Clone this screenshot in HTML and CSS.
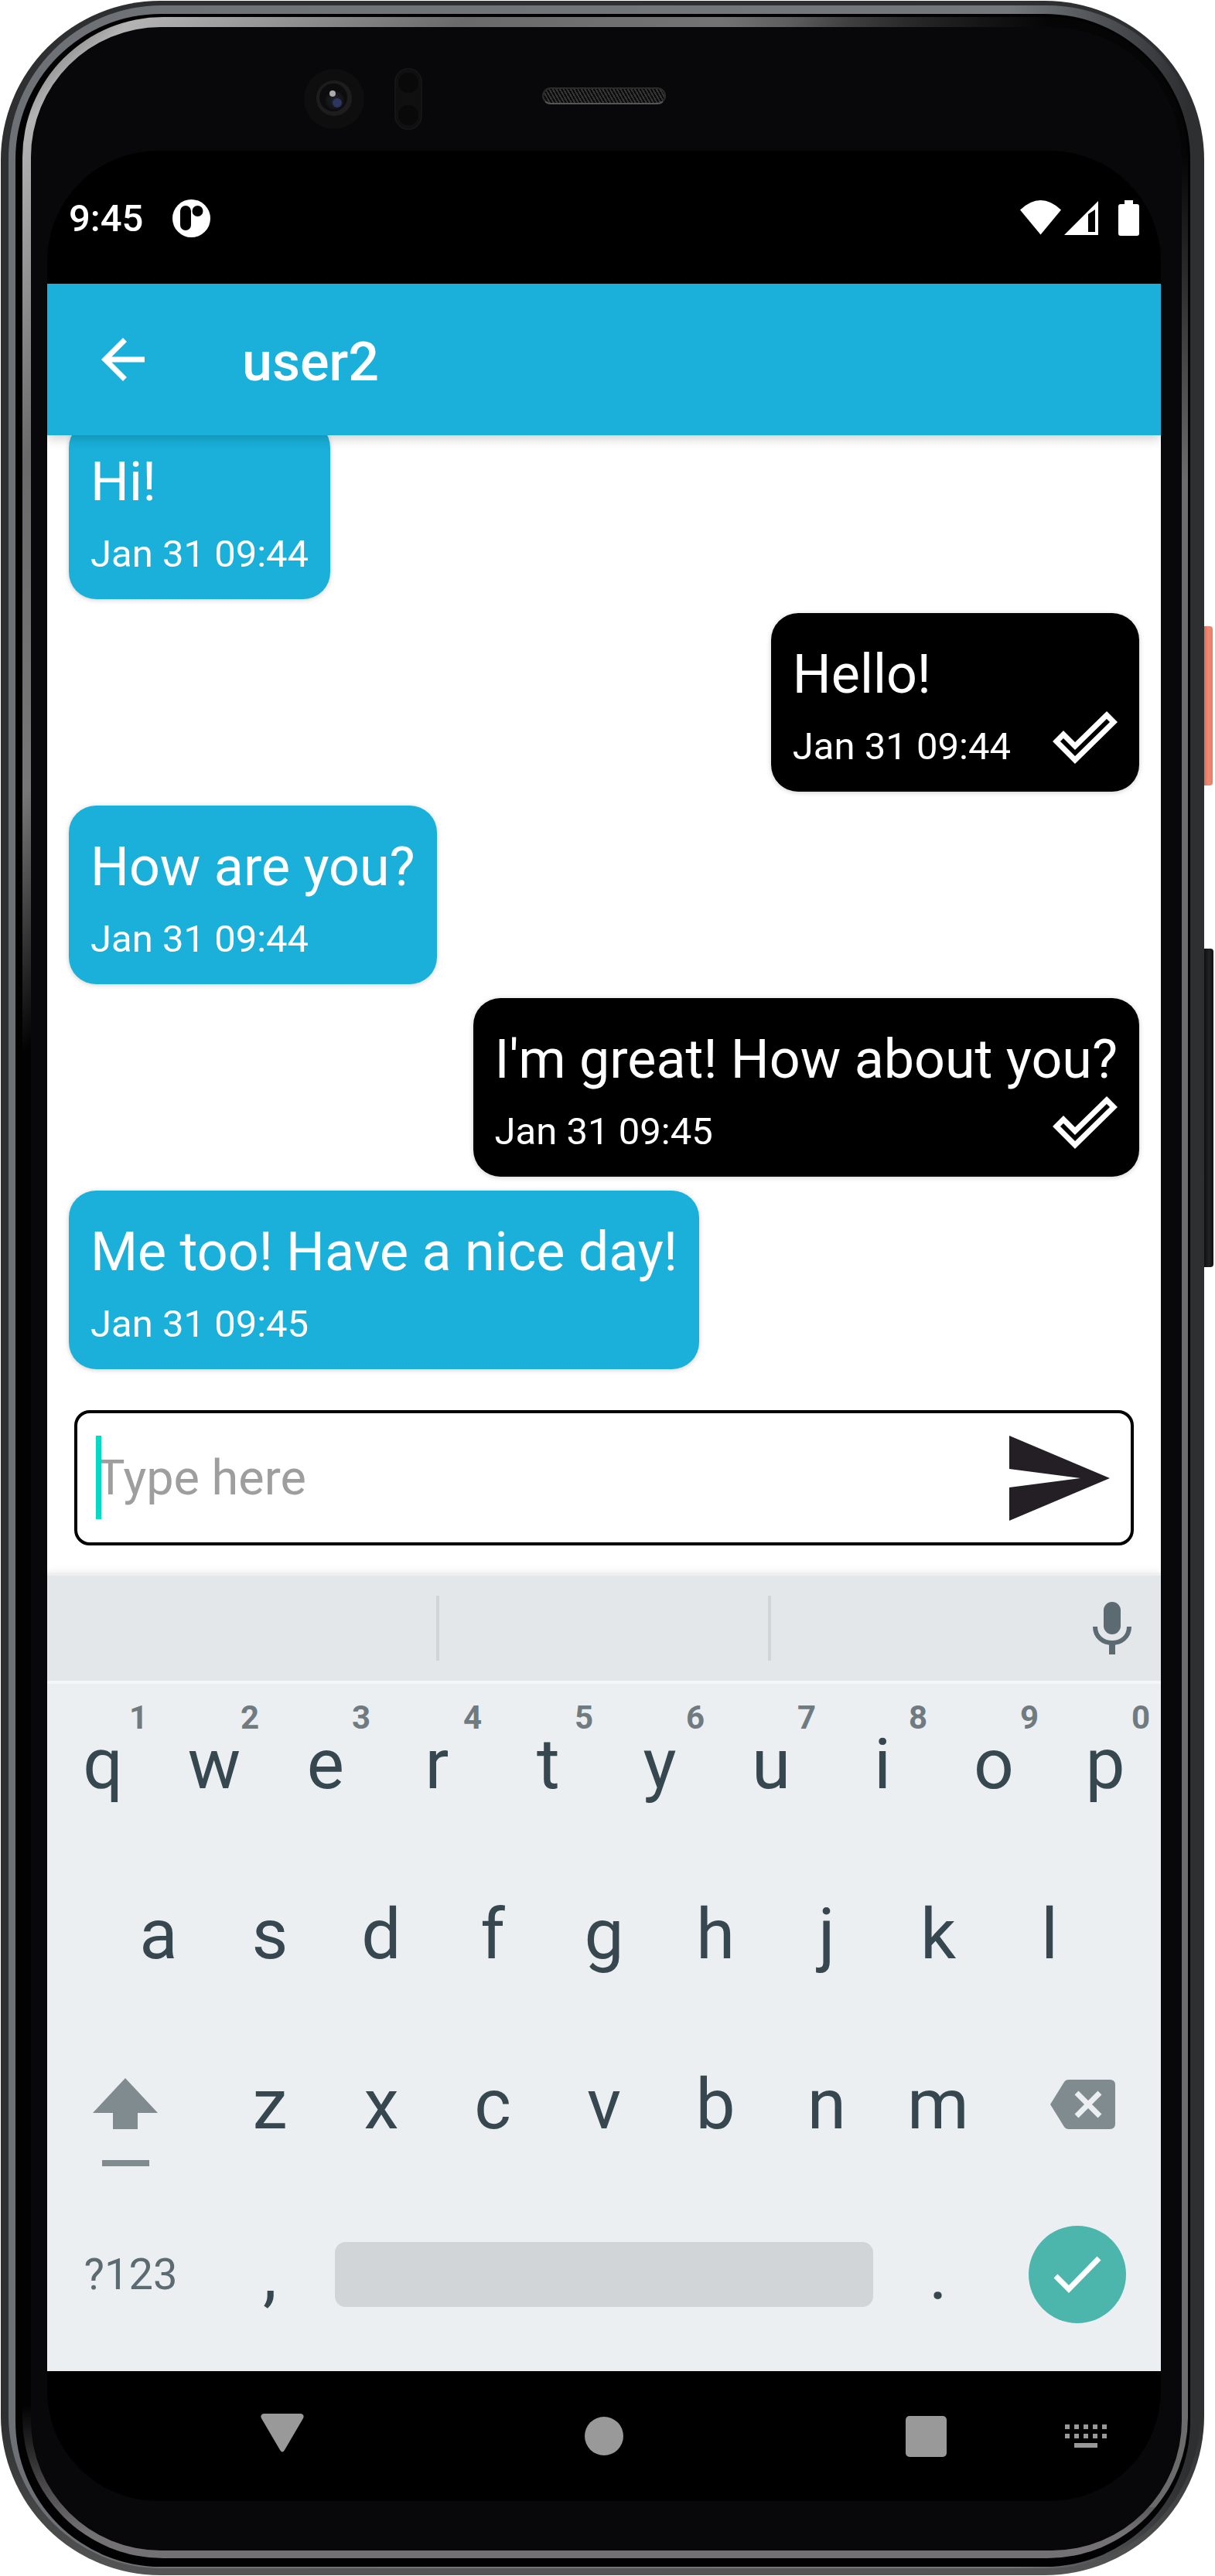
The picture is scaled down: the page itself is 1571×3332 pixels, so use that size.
FILE: index.html
```html
<!DOCTYPE html>
<html lang="en">
<head>
<meta charset="utf-8">
<meta name="viewport" content="width=device-width, initial-scale=1">
<title>Chat with user2</title>
<link rel="stylesheet" href="styles.css">
</head>
<body>
<div class="phone">
  <span class="side-button power"></span>
  <span class="side-button volume"></span>
  <div class="case"><div class="metal"><div class="groove"><div class="edge"><div class="glass">
    <div class="forehead">
      <svg class="sensors" width="80" height="80" viewBox="0 0 80 80" aria-hidden="true">
        <defs>
          <radialGradient id="lens"><stop offset="0" stop-color="#1d2030"/><stop offset="1" stop-color="#121214"/></radialGradient>
        </defs>
        <circle cx="39" cy="40" r="39" fill="#0e0e0f"/>
        <circle cx="39" cy="39" r="23" fill="#1d1d1e"/>
        <circle cx="38" cy="38" r="18" fill="#0c0c0f"/>
        <circle cx="40" cy="42" r="12" fill="url(#lens)"/>
        <circle cx="43" cy="45" r="6" fill="#2d365e"/>
        <circle cx="37" cy="33" r="4" fill="#aaa"/>
      </svg>
      <svg class="proximity" width="36" height="80" viewBox="0 0 36 80" aria-hidden="true">
        <rect x="1" y="1" width="34" height="78" rx="17" fill="#0f0f10" stroke="#151515" stroke-width="2"/>
        <circle cx="18" cy="19" r="14" fill="#09090a" stroke="#141414"/>
        <circle cx="18" cy="61" r="14" fill="#09090a" stroke="#141414"/>
      </svg>
      <span class="speaker"></span>
    </div>
    <main class="screen">
      <div class="status-bar">
        <time>9:45</time>
        <svg width="49" height="49" viewBox="0 0 49 49" aria-hidden="true">
          <circle cx="24.500" cy="24.500" r="24.500" fill="#fff"/>
          <rect x="10" y="8" width="14" height="32" rx="7"/>
          <circle cx="32.500" cy="15" r="7"/>
        </svg>
        <svg class="radios" width="154" height="46" viewBox="0 0 154 46" fill="#fff" aria-hidden="true">
          <path d="M0 12.500Q26.500-12.500 53 12.500L26.500 44.500Z"/>
          <path fill-rule="evenodd" d="M57 45 101 1V45ZM88 18V41H97V12Z"/>
          <path d="M135 0h11v5h5q3 0 3 3v35q0 3-3 3h-21q-3 0-3-3V8q0-3 3-3h5z"/>
        </svg>
      </div>

      <header class="app-bar">
        <button class="icon-button" aria-label="Back">
          <svg width="84" height="84" viewBox="0 0 24 24" fill="#fff"><path d="M20 11H7.830l5.590-5.590L12 4l-8 8 8 8 1.410-1.410L7.830 13H20z"/></svg>
        </button>
        <h1>user2</h1>
      </header>

      <ol class="messages">
        <li class="message received"><p>Hi!</p><div class="meta"><time>Jan 31 09:44</time></div></li>
        <li class="message sent"><p>Hello!</p><div class="meta"><time>Jan 31 09:44</time>
          <svg width="84" height="78" viewBox="0 0 84 78" fill="none" stroke="#fff" stroke-width="7" aria-label="Delivered"><path d="M5 43 14 34 29 49 70 9 79 18 29 67Z"/></svg></div></li>
        <li class="message received"><p>How are you?</p><div class="meta"><time>Jan 31 09:44</time></div></li>
        <li class="message sent"><p>I'm great! How about you?</p><div class="meta"><time>Jan 31 09:45</time>
          <svg width="84" height="78" viewBox="0 0 84 78" fill="none" stroke="#fff" stroke-width="7" aria-label="Delivered"><path d="M5 43 14 34 29 49 70 9 79 18 29 67Z"/></svg></div></li>
        <li class="message received"><p>Me too! Have a nice day!</p><div class="meta"><time>Jan 31 09:45</time></div></li>
      </ol>

      <form class="composer">
        <div class="field">
          <span class="caret"></span>
          <input type="text" placeholder="Type here" aria-label="Message">
          <button type="button" class="icon-button" aria-label="Send">
            <svg width="130" height="110" viewBox="0 0 130 110" fill="#231f25"><path d="M0 0 130 55 0 110V67L92 55 0 43Z"/></svg>
          </button>
        </div>
      </form>

      <section class="keyboard" aria-label="Keyboard">
        <div class="suggestions">
          <span class="slot"></span><span class="slot"></span><span class="slot"></span>
          <button class="icon-button mic" aria-label="Voice input">
            <svg width="50" height="68" viewBox="0 0 50 68"><rect x="14" y="0" width="22" height="42" rx="11" fill="#5c6a71"/><path d="M3 32C3 60 47 60 47 32" fill="none" stroke="#5c6a71" stroke-width="6"/><path d="M21 54h8v14h-8z" fill="#5c6a71"/></svg>
          </button>
        </div>
        <div class="rows">
          <div class="row">
            <button class="key">q<small>1</small></button><button class="key">w<small>2</small></button><button class="key">e<small>3</small></button><button class="key">r<small>4</small></button><button class="key">t<small>5</small></button><button class="key">y<small>6</small></button><button class="key">u<small>7</small></button><button class="key">i<small>8</small></button><button class="key">o<small>9</small></button><button class="key">p<small>0</small></button>
          </div>
          <div class="row inset">
            <button class="key">a</button><button class="key">s</button><button class="key">d</button><button class="key">f</button><button class="key">g</button><button class="key">h</button><button class="key">j</button><button class="key">k</button><button class="key">l</button>
          </div>
          <div class="row">
            <button class="key wide shift" aria-label="Shift">
              <svg width="84" height="114" viewBox="0 0 84 114" fill="#808b8f"><path d="M42 0 84 45H58V66H26V45H0ZM12 106H73V114H12Z"/></svg>
            </button>
            <button class="key">z</button><button class="key">x</button><button class="key">c</button><button class="key">v</button><button class="key">b</button><button class="key">n</button><button class="key">m</button>
            <button class="key wide erase" aria-label="Backspace">
              <svg width="84" height="64" viewBox="0 0 84 64"><path d="M24 0H77Q84 0 84 7V57Q84 64 77 64H24Q20 64 18 61L0 32 18 3Q20 0 24 0Z" fill="#808b8f"/><path d="M34 17 64 47M64 17 34 47" stroke="#ebeff2" stroke-width="7"/></svg>
            </button>
          </div>
          <div class="row">
            <button class="key wide symbols">?123</button>
            <button class="key">,</button>
            <button class="key space" aria-label="Space"><span></span></button>
            <button class="key">.</button>
            <button class="key wide" aria-label="Done">
              <span class="done"><svg width="62" height="50" viewBox="0 0 62 50" fill="none" stroke="#fff" stroke-width="7"><path d="M3 27 20 44 59 4"/></svg></span>
            </button>
          </div>
        </div>
      </section>

      <nav class="nav-bar">
        <button class="icon-button nav-back" aria-label="Hide keyboard"><svg width="56" height="50" viewBox="0 0 56 50" fill="#999"><path d="M4 0H52Q57 1 55 6L31 47Q28 52 25 47L1 6Q-1 1 4 0Z"/></svg></button>
        <button class="icon-button nav-home" aria-label="Home"><svg width="50" height="50" viewBox="0 0 50 50" fill="#999"><circle cx="25" cy="25" r="25"/></svg></button>
        <button class="icon-button nav-recent" aria-label="Recent apps"><svg width="53" height="53" viewBox="0 0 53 53" fill="#999"><rect width="53" height="53" rx="5"/></svg></button>
        <button class="icon-button nav-input" aria-label="Switch keyboard"><svg width="54" height="30" viewBox="0 0 54 30" fill="#999"><path d="M0 0h6v6H0zM12 0h6v6h-6zM24 0h6v6h-6zM36 0h6v6h-6zM48 0h6v6h-6zM0 12h6v6H0zM12 12h6v6h-6zM24 12h6v6h-6zM36 12h6v6h-6zM48 12h6v6h-6zM12 24h30v6H12z"/></svg></button>
      </nav>
    </main>
  </div></div></div></div></div>
</div>
</body>
</html>
```
FILE: styles.css
```css
* { box-sizing: border-box; }

body {
  margin: 0;
  background: #fff;
  font-family: Roboto, sans-serif;
}

button {
  margin: 0;
  padding: 0;
  border: 0;
  background: none;
  font: inherit;
  color: inherit;
}

svg { display: block; }

.icon-button {
  display: flex;
  align-items: center;
  justify-content: center;
}

/* Handset */
.phone {
  position: relative;
  height: 100vh;
  padding: 1px 14px 1px 1px;
}

.side-button {
  position: absolute;
  right: 2px;
  width: 14px;
  border-radius: 0 4px 4px 0;
}

.power {
  top: 810px;
  height: 206px;
  right: 3px;
  background: linear-gradient(90deg, #d9604a, #f08a74 60%, #ea7c66);
}

.volume {
  top: 1227px;
  height: 412px;
  background: linear-gradient(90deg, #0a0a0a, #222 60%, #111);
}

.case, .metal, .groove, .edge, .glass { height: 100%; }

.case {
  position: relative;
  padding: 6px 5px 9px 10px;
  border-radius: 206px;
  background: linear-gradient(#2e2f30 94%, #555 100%);
}

.metal {
  padding: 11px 13px 2px 9px;
  border-radius: 198px;
  background: linear-gradient(90deg, #6d7176 0, #74777c 84%, #2d2f31 99%);
}

.groove {
  padding: 4px 3px 11px 9px;
  border-radius: 188px;
  background: #020202;
}

.edge {
  padding: 13px 8px 10px 11px;
  border-radius: 182px;
  background:
    radial-gradient(circle at 100% 0, #050506 0 180px, transparent 600px),
    linear-gradient(90deg, transparent 50%, #6c6c6c 100%) 0 0 / 100% 98% no-repeat,
    linear-gradient(135deg, #555 0, #b4b4b4 3%, #6a6a6a 12%, #777 21%, transparent 28%),
    linear-gradient(#020202 94%, #747174 99%);
}

.glass {
  display: flex;
  flex-direction: column;
  padding: 0 27px 64px 21px;
  border-radius: 168px;
  background: #08080a;
}

.forehead {
  position: relative;
  flex: none;
  height: 160px;
}

.sensors, .proximity, .speaker { position: absolute; }
.sensors { left: 332px; top: 53px; }
.proximity { left: 449px; top: 53px; }

.speaker {
  left: 50%;
  top: 78px;
  width: 160px;
  height: 22px;
  margin-left: -80px;
  border: 2px solid #2b2b2b;
  border-bottom-color: #555;
  border-radius: 11px;
  background: repeating-linear-gradient(60deg, #0c0c0c 0 2px, #343434 2px 4px);
}

/* Screen */
.screen {
  flex: 1;
  min-height: 0;
  display: flex;
  flex-direction: column;
  overflow: hidden;
  border-radius: 143px;
  background: #000;
}

.status-bar {
  flex: none;
  display: flex;
  align-items: center;
  gap: 38px;
  height: 172px;
  padding: 2px 28px 0;
  color: #fff;
  font-size: 49px;
  font-weight: 500;
}

.radios { margin-left: auto; }

.app-bar {
  position: relative;
  z-index: 1;
  flex: none;
  display: flex;
  align-items: center;
  gap: 112px;
  height: 196px;
  padding: 0 56px;
  background: #1ab0d9;
  box-shadow: 0 4px 14px rgba(0, 0, 0, 0.2);
  color: #fff;
}

.app-bar h1 {
  margin: 0;
  padding-top: 6px;
  font-size: 70px;
  font-weight: 500;
}

.messages {
  flex: 1;
  min-height: 0;
  display: flex;
  flex-direction: column;
  justify-content: flex-end;
  gap: 18px;
  margin: 0;
  padding: 0 28px 53px;
  list-style: none;
  background: #fff;
}

.message {
  flex: none;
  padding: 35px 28px 30px;
  border-radius: 35px;
  box-shadow: 0 1px 6px rgba(0, 0, 0, 0.2);
  color: #fff;
}

.message p {
  margin: 0;
  font-size: 70px;
  line-height: 88px;
}

.received {
  align-self: flex-start;
  background: #1ab0d9;
}

.sent {
  align-self: flex-end;
  background: #000;
}

.meta {
  display: flex;
  align-items: flex-end;
  justify-content: space-between;
  gap: 54px;
  height: 78px;
  font-size: 49px;
  line-height: 57px;
}

/* Message entry */
.composer {
  flex: none;
  padding: 0 35px 35px;
  background: #fff;
}

.field {
  position: relative;
  display: flex;
  align-items: center;
  height: 175px;
  padding: 0 27px 0 24px;
  border: 4px solid #000;
  border-radius: 20px;
}

.field input {
  flex: 1;
  min-width: 0;
  padding: 0;
  border: 0;
  outline: 0;
  background: none;
  font: 63px Roboto, sans-serif;
}

.field input::placeholder {
  color: #9e9e9e;
  opacity: 1;
}

.caret {
  position: absolute;
  left: 24px;
  top: 29px;
  width: 7px;
  height: 108px;
  background: #03dac5;
}

/* Keyboard */
.keyboard {
  position: relative;
  flex: none;
  border-top: 4px solid #eeeff1;
  background: #ebeff2;
  box-shadow: 0 0 12px rgba(0, 0, 0, 0.08);
  color: #37474f;
}

.suggestions {
  display: grid;
  grid-template-columns: 507fr 429fr 369fr 135fr;
  align-items: center;
  height: 140px;
  border-bottom: 4px solid #f4f7f9;
  background: #e3e7ea;
}

.slot { height: 84px; }
.slot:nth-child(-n+2) { border-right: 4px solid #d1d5d8; }
.mic { padding-left: 8px; }

.rows {
  display: flex;
  flex-direction: column;
  gap: 20px;
  padding: 4px 0 25px;
}

.row {
  display: flex;
  height: 200px;
}

.inset { padding: 0 5%; }

.key {
  position: relative;
  flex: 144 1 0;
  display: flex;
  align-items: center;
  justify-content: center;
  min-width: 0;
  font-size: 91px;
  line-height: 106px;
}

.key small {
  position: absolute;
  top: 19px;
  right: 14px;
  color: #6f7b80;
  font-size: 42px;
  line-height: 42px;
  font-weight: 700;
}

.wide { flex-grow: 216; }

.shift {
  align-items: flex-start;
  padding-top: 66px;
}

.shift svg { margin-right: 14px; }
.erase svg { margin-left: 14px; }

.symbols {
  color: #5c6a71;
  font-size: 56px;
}

.space { flex-grow: 720; }

.space span {
  flex: 1;
  height: 84px;
  margin: 0 12px;
  border-radius: 14px;
  background: #d1d5d8;
}

.done {
  display: flex;
  align-items: center;
  justify-content: center;
  width: 126px;
  height: 126px;
  border-radius: 50%;
  background: #4db6ac;
}

/* System navigation */
.nav-bar {
  flex: none;
  display: grid;
  grid-template-columns: 208fr 192fr 224fr 192fr 224fr 192fr 208fr;
  align-items: center;
  height: 168px;
}

.nav-back { grid-column: 2; padding-bottom: 8px; }
.nav-home { grid-column: 4; }
.nav-recent { grid-column: 6; }
.nav-input { grid-column: 7; padding-left: 14px; }
```
